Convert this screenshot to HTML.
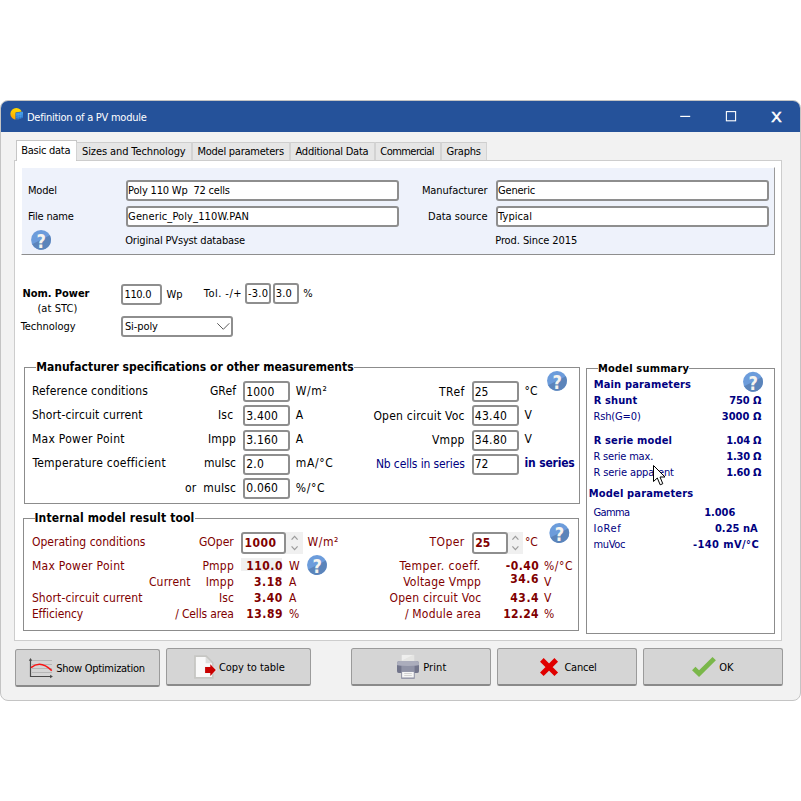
<!DOCTYPE html>
<html lang="en">
<head>
<meta charset="utf-8">
<title>Definition of a PV module</title>
<style>
html,body{margin:0;padding:0;}
body{width:801px;height:801px;background:#fff;position:relative;overflow:hidden;
 font-family:"DejaVu Sans Condensed","Liberation Sans",sans-serif;font-size:11px;color:#000;}
.a,.t{position:absolute;box-sizing:border-box;}
.t{white-space:pre;line-height:16px;height:16px;}
.win{left:0;top:100px;width:801px;height:601px;background:#f2f2f2;border:1px solid #c4c4c4;border-radius:8px;overflow:hidden;}
.titlebar{left:0;top:0;width:799px;height:31px;background:#25529a;}
.tab{background:#e6e6e6;border:1px solid #d3d3d3;border-top-color:#cecece;border-bottom:none;}
.tab.sel{background:#fff;border-color:#c6c6c6;}
.panel{background:#fff;border:1px solid #cdcdcd;}
.info{background:#eef2fb;border:1px solid #fff;border-right-color:#9a9a9a;border-bottom-color:#8e8e8e;}
.in{background:#fff;border:2px solid #8e8e8e;border-radius:3px;}
.grp{border:1px solid #8c8c8c;}
.cap{background:#fff;}
.btn{background:#d5d5d5;border:1px solid #9b9b9b;border-bottom:2px solid #8a8a8a;border-radius:2.5px;}
.spin{background:#f0f0f0;}
.ro{background:#f0f0f0;}
svg.a{overflow:visible;}
.lib{font-family:"Liberation Sans",sans-serif;}
.cx{-webkit-text-stroke:0.55px #fff;}

</style>
</head>
<body>
<div class="a win"><div class="a titlebar"></div></div>
<svg class="a" style="left:10px;top:107px" width="14" height="14" viewBox="0 0 14 14">
<defs><linearGradient id="sun" x1="0.6" y1="0" x2="0.2" y2="1"><stop offset="0" stop-color="#ffdb00"/><stop offset="0.5" stop-color="#ffc400"/><stop offset="1" stop-color="#ff9a00"/></linearGradient>
<linearGradient id="pv" x1="0" y1="0" x2="0" y2="1"><stop offset="0" stop-color="#46a2ee"/><stop offset="0.6" stop-color="#2f7fd2"/><stop offset="1" stop-color="#2a62b0"/></linearGradient></defs>
<circle cx="6.3" cy="6.85" r="5.95" fill="url(#sun)"/>
<path d="M5.5 5.6 L13.2 4.3 V11.2 L5.5 13.3Z" fill="#25529a"/>
<path d="M5.8 5.9 L13 4.7 V10.9 L5.8 12.9Z" fill="url(#pv)"/>
<path d="M8.2 5.5V12.2 M10.6 5.1V11.6 M5.8 8.2L13 6.8 M5.8 10.5L13 8.9" fill="none" stroke="#6ab4f4" stroke-width="0.45" opacity="0.7"/>
</svg>
<span class="t" style="top:110.00px;font-size:11px;letter-spacing:-0.255px;left:27.00px;color:#fff;">Definition of a PV module</span>
<svg class="a" style="left:675px;top:106px" width="115" height="22" viewBox="675 106 115 22">
<path d="M680.2 116.4H690.2" stroke="#fff" stroke-width="1.2" fill="none"/>
<rect x="726.4" y="111.6" width="9.2" height="9.2" stroke="#fff" stroke-width="1.1" fill="none"/>
</svg>
<span class="t lib cx" style="top:109.00px;font-size:15.5px;left:771.30px;color:#fff;">X</span>
<div class="a panel" style="left:14px;top:160px;width:768px;height:481px;"></div>
<div class="a tab sel" style="left:16px;top:140px;width:61px;height:21px;"></div>
<span class="t" style="top:143.00px;font-size:11px;letter-spacing:-0.260px;left:21.20px;">Basic data</span>
<div class="a tab" style="left:76px;top:142px;width:116px;height:18px;"></div>
<span class="t" style="top:144.00px;font-size:11px;letter-spacing:-0.102px;left:82.00px;">Sizes and Technology</span>
<div class="a tab" style="left:192px;top:142px;width:98px;height:18px;"></div>
<span class="t" style="top:144.00px;font-size:11px;letter-spacing:-0.238px;left:197.40px;">Model parameters</span>
<div class="a tab" style="left:290px;top:142px;width:85px;height:18px;"></div>
<span class="t" style="top:144.00px;font-size:11px;letter-spacing:-0.238px;left:295.50px;">Additional Data</span>
<div class="a tab" style="left:375px;top:142px;width:66px;height:18px;"></div>
<span class="t" style="top:144.00px;font-size:11px;letter-spacing:-0.552px;left:380.30px;">Commercial</span>
<div class="a tab" style="left:441px;top:142px;width:46px;height:18px;"></div>
<span class="t" style="top:144.00px;font-size:11px;letter-spacing:-0.183px;left:446.40px;">Graphs</span>
<div class="a info" style="left:21px;top:167px;width:754px;height:88px;"></div>
<span class="t" style="top:183.00px;font-size:11px;letter-spacing:-0.155px;left:27.90px;">Model</span>
<span class="t" style="top:209.00px;font-size:11px;letter-spacing:-0.225px;left:27.90px;">File name</span>
<div class="a in" style="left:126px;top:180px;width:273px;height:21px;"></div>
<span class="t" style="top:183.00px;font-size:11px;letter-spacing:-0.189px;left:128.10px;">Poly 110 Wp  72 cells</span>
<div class="a in" style="left:126px;top:206px;width:273px;height:21px;"></div>
<span class="t" style="top:209.00px;font-size:11px;letter-spacing:0.120px;left:128.10px;">Generic_Poly_110W.PAN</span>
<svg class="a help" style="left:30px;top:229px" width="22" height="22" viewBox="-11.05 -10.85 22 22">
<circle r="9.95" fill="#6c9cdb"/>
<path d="M8.87 -4.52 A9.95 9.95 0 0 1 -8.87 4.52 Z" fill="#5b84ba"/>
<text x="0.1" y="7.9" text-anchor="middle" transform="scale(0.9,1)" font-family="DejaVu Sans Condensed,Liberation Sans,sans-serif" font-weight="bold" font-size="20" fill="#f6f4ef">?</text>
</svg>
<span class="t" style="top:233.00px;font-size:11px;letter-spacing:-0.169px;left:125.20px;">Original PVsyst database</span>
<span class="t" style="top:183.00px;font-size:11px;letter-spacing:-0.062px;left:421.90px;">Manufacturer</span>
<span class="t" style="top:209.00px;font-size:11px;letter-spacing:-0.021px;left:428.10px;">Data source</span>
<div class="a in" style="left:496px;top:180px;width:273px;height:21px;"></div>
<span class="t" style="top:183.00px;font-size:11px;letter-spacing:-0.215px;left:498.10px;">Generic</span>
<div class="a in" style="left:496px;top:206px;width:273px;height:21px;"></div>
<span class="t" style="top:209.00px;font-size:11px;letter-spacing:0.069px;left:498.10px;">Typical</span>
<span class="t" style="top:233.00px;font-size:11px;letter-spacing:-0.086px;left:495.20px;">Prod. Since 2015</span>
<span class="t" style="top:286.00px;font-size:11px;letter-spacing:-0.032px;left:22.40px;font-weight:bold;">Nom. Power</span>
<span class="t" style="top:301.00px;font-size:11px;letter-spacing:0.099px;left:37.40px;">(at STC)</span>
<span class="t" style="top:319.00px;font-size:11px;letter-spacing:-0.050px;left:20.70px;">Technology</span>
<div class="a in" style="left:121px;top:284px;width:41px;height:21px;"></div>
<span class="t" style="top:287.00px;font-size:11px;letter-spacing:-0.307px;left:124.40px;">110.0</span>
<span class="t" style="top:287.00px;font-size:11px;left:166.40px;">Wp</span>
<span class="t" style="top:286.00px;font-size:11px;letter-spacing:0.462px;left:203.80px;">Tol. -/+</span>
<div class="a in" style="left:245px;top:283px;width:26px;height:21px;"></div>
<span class="t" style="top:286.00px;font-size:11px;letter-spacing:0.263px;left:247.90px;">-3.0</span>
<div class="a in" style="left:273px;top:283px;width:26px;height:21px;"></div>
<span class="t" style="top:286.00px;font-size:11px;letter-spacing:0.183px;left:275.70px;">3.0</span>
<span class="t" style="top:286.00px;font-size:11px;left:303.20px;">%</span>
<div class="a in" style="left:121px;top:316px;width:112px;height:21px;"></div>
<span class="t" style="top:319.00px;font-size:11px;letter-spacing:-0.077px;left:124.90px;">Si-poly</span>
<svg class="a" style="left:216px;top:322px" width="15" height="9" viewBox="216 322 15 9"><path d="M217.3 323.3 L223.3 329.3 L229.3 323.3" stroke="#5a5a5a" stroke-width="1" fill="none"/></svg>
<div class="a grp" style="left:24px;top:367px;width:556px;height:137px;"></div>
<div class="a cap" style="left:36px;top:360px;width:318px;height:16px;"></div>
<span class="t" style="top:359.00px;font-size:12px;left:36.20px;font-weight:bold;">Manufacturer specifications or other measurements</span>
<span class="t" style="top:383.00px;font-size:12px;letter-spacing:0.149px;left:31.90px;">Reference conditions</span>
<span class="t" style="top:407.00px;font-size:12px;letter-spacing:0.114px;left:31.90px;">Short-circuit current</span>
<span class="t" style="top:431.00px;font-size:12px;letter-spacing:0.291px;left:31.90px;">Max Power Point</span>
<span class="t" style="top:455.00px;font-size:12px;letter-spacing:0.237px;left:32.40px;">Temperature coefficient</span>
<span class="t" style="top:383.00px;font-size:12px;letter-spacing:0.106px;left:209.90px;">GRef</span>
<span class="t" style="top:407.00px;font-size:12px;letter-spacing:0.300px;left:217.90px;">Isc</span>
<span class="t" style="top:431.00px;font-size:12px;letter-spacing:0.226px;left:207.90px;">Impp</span>
<span class="t" style="top:455.00px;font-size:12px;left:203.90px;">muIsc</span>
<span class="t" style="top:480.00px;font-size:12px;letter-spacing:0.138px;left:184.90px;">or  muIsc</span>
<div class="a in" style="left:243px;top:381px;width:47px;height:21px;"></div>
<span class="t" style="top:384.00px;font-size:12px;letter-spacing:0.210px;left:246.20px;">1000</span>
<span class="t" style="top:383.00px;font-size:12px;letter-spacing:0.600px;left:295.80px;">W/m²</span>
<div class="a in" style="left:243px;top:405px;width:47px;height:21px;"></div>
<span class="t" style="top:408.00px;font-size:12px;letter-spacing:0.223px;left:246.20px;">3.400</span>
<span class="t" style="top:407.00px;font-size:12px;left:295.80px;">A</span>
<div class="a in" style="left:243px;top:430px;width:47px;height:21px;"></div>
<span class="t" style="top:432.00px;font-size:12px;letter-spacing:0.223px;left:246.20px;">3.160</span>
<span class="t" style="top:431.00px;font-size:12px;left:295.80px;">A</span>
<div class="a in" style="left:243px;top:454px;width:47px;height:21px;"></div>
<span class="t" style="top:456.00px;font-size:12px;letter-spacing:0.300px;left:246.20px;">2.0</span>
<span class="t" style="top:455.00px;font-size:12px;letter-spacing:0.600px;left:295.80px;">mA/°C</span>
<div class="a in" style="left:243px;top:478px;width:47px;height:21px;"></div>
<span class="t" style="top:480.00px;font-size:12px;letter-spacing:0.223px;left:246.20px;">0.060</span>
<span class="t" style="top:480.00px;font-size:12px;letter-spacing:0.600px;left:295.80px;">%/°C</span>
<span class="t" style="top:384.00px;font-size:12px;letter-spacing:0.467px;left:438.90px;">TRef</span>
<span class="t" style="top:408.00px;font-size:12px;letter-spacing:0.219px;left:373.40px;">Open circuit Voc</span>
<span class="t" style="top:432.00px;font-size:12px;letter-spacing:0.325px;left:431.90px;">Vmpp</span>
<span class="t" style="top:456.00px;font-size:12px;letter-spacing:-0.138px;left:375.90px;color:#00007f;">Nb cells in series</span>
<div class="a in" style="left:472px;top:381px;width:47px;height:21px;"></div>
<span class="t" style="top:384.00px;font-size:12px;left:474.70px;">25</span>
<span class="t" style="top:383.00px;font-size:12px;left:524.60px;">°C</span>
<div class="a in" style="left:472px;top:405px;width:47px;height:21px;"></div>
<span class="t" style="top:408.00px;font-size:12px;letter-spacing:0.348px;left:474.70px;">43.40</span>
<span class="t" style="top:407.00px;font-size:12px;left:524.60px;">V</span>
<div class="a in" style="left:472px;top:430px;width:47px;height:21px;"></div>
<span class="t" style="top:432.00px;font-size:12px;letter-spacing:0.348px;left:474.70px;">34.80</span>
<span class="t" style="top:431.00px;font-size:12px;left:524.60px;">V</span>
<div class="a in" style="left:472px;top:454px;width:47px;height:21px;"></div>
<span class="t" style="top:456.00px;font-size:12px;left:474.70px;">72</span>
<span class="t" style="top:455.00px;font-size:12px;letter-spacing:-0.184px;left:524.60px;font-weight:bold;color:#00007f;">in series</span>
<svg class="a help" style="left:546px;top:370px" width="22" height="22" viewBox="-11 -10.85 22 22">
<circle r="9.95" fill="#6c9cdb"/>
<path d="M8.87 -4.52 A9.95 9.95 0 0 1 -8.87 4.52 Z" fill="#5b84ba"/>
<text x="0.1" y="7.9" text-anchor="middle" transform="scale(0.9,1)" font-family="DejaVu Sans Condensed,Liberation Sans,sans-serif" font-weight="bold" font-size="20" fill="#f6f4ef">?</text>
</svg>
<div class="a grp" style="left:23px;top:518px;width:556px;height:113px;"></div>
<div class="a cap" style="left:35px;top:511px;width:160px;height:16px;"></div>
<span class="t" style="top:510.00px;font-size:12px;letter-spacing:0.149px;left:34.40px;font-weight:bold;">Internal model result tool</span>
<span class="t" style="top:534.00px;font-size:12px;letter-spacing:0.034px;left:31.90px;color:#7f0000;">Operating conditions</span>
<span class="t" style="top:558.00px;font-size:12px;letter-spacing:0.291px;left:31.90px;color:#7f0000;">Max Power Point</span>
<span class="t" style="top:574.00px;font-size:12px;letter-spacing:0.183px;left:148.90px;color:#7f0000;">Current</span>
<span class="t" style="top:590.00px;font-size:12px;letter-spacing:0.114px;left:31.90px;color:#7f0000;">Short-circuit current</span>
<span class="t" style="top:606.00px;font-size:12px;letter-spacing:-0.102px;left:31.90px;color:#7f0000;">Efficiency</span>
<span class="t" style="top:606.00px;font-size:12px;letter-spacing:-0.160px;left:175.20px;color:#7f0000;">/ Cells area</span>
<span class="t" style="top:534.00px;font-size:12px;letter-spacing:0.022px;left:198.90px;color:#7f0000;">GOper</span>
<span class="t" style="top:558.00px;font-size:12px;letter-spacing:0.217px;left:202.40px;color:#7f0000;">Pmpp</span>
<span class="t" style="top:574.00px;font-size:12px;letter-spacing:0.226px;left:205.70px;color:#7f0000;">Impp</span>
<span class="t" style="top:590.00px;font-size:12px;letter-spacing:0.175px;left:218.90px;color:#7f0000;">Isc</span>
<div class="a spin" style="left:285px;top:532px;width:18px;height:22px;"></div>
<div class="a in" style="left:241px;top:532px;width:45px;height:22px;"></div>
<span class="t" style="top:535.00px;font-size:12px;letter-spacing:0.518px;left:244.40px;font-weight:bold;color:#7f0000;">1000</span>
<svg class="a" style="left:289px;top:535px" width="12" height="16" viewBox="289 535 12 16"><path d="M291.6 539.6 L294.6 536.4 L297.6 539.6 M291.6 546.4 L294.6 549.6 L297.6 546.4" stroke="#9c9c9c" stroke-width="1.25" fill="none"/></svg>
<span class="t" style="top:534.00px;font-size:12px;letter-spacing:0.600px;left:307.40px;color:#7f0000;">W/m²</span>
<div class="a ro" style="left:241px;top:558px;width:41px;height:13px;"></div>
<span class="t" style="top:558.00px;font-size:12px;letter-spacing:0.536px;left:246.20px;font-weight:bold;color:#7f0000;">110.0</span>
<span class="t" style="top:558.00px;font-size:12px;left:288.90px;color:#7f0000;">W</span>
<svg class="a help" style="left:306px;top:554px" width="22" height="22" viewBox="-11 -11 22 22">
<circle r="9.95" fill="#6c9cdb"/>
<path d="M8.87 -4.52 A9.95 9.95 0 0 1 -8.87 4.52 Z" fill="#5b84ba"/>
<text x="0.1" y="7.9" text-anchor="middle" transform="scale(0.9,1)" font-family="DejaVu Sans Condensed,Liberation Sans,sans-serif" font-weight="bold" font-size="20" fill="#f6f4ef">?</text>
</svg>
<span class="t" style="top:574.00px;font-size:12px;letter-spacing:0.600px;left:253.90px;font-weight:bold;color:#7f0000;">3.18</span>
<span class="t" style="top:574.00px;font-size:12px;left:288.90px;color:#7f0000;">A</span>
<span class="t" style="top:590.00px;font-size:12px;letter-spacing:0.600px;left:253.90px;font-weight:bold;color:#7f0000;">3.40</span>
<span class="t" style="top:590.00px;font-size:12px;left:288.90px;color:#7f0000;">A</span>
<span class="t" style="top:606.00px;font-size:12px;letter-spacing:0.536px;left:246.20px;font-weight:bold;color:#7f0000;">13.89</span>
<span class="t" style="top:606.00px;font-size:12px;left:288.90px;color:#7f0000;">%</span>
<span class="t" style="top:534.00px;font-size:12px;letter-spacing:0.467px;left:429.40px;color:#7f0000;">TOper</span>
<div class="a spin" style="left:507px;top:532px;width:16px;height:22px;"></div>
<div class="a in" style="left:472px;top:532px;width:36px;height:22px;"></div>
<span class="t" style="top:535.00px;font-size:12px;left:475.20px;font-weight:bold;color:#7f0000;">25</span>
<svg class="a" style="left:509px;top:535px" width="12" height="16" viewBox="509 535 12 16"><path d="M512.4 539.6 L515.4 536.4 L518.4 539.6 M512.4 546.4 L515.4 549.6 L518.4 546.4" stroke="#9c9c9c" stroke-width="1.25" fill="none"/></svg>
<span class="t" style="top:534.00px;font-size:12px;left:524.90px;color:#7f0000;">°C</span>
<svg class="a help" style="left:548px;top:522px" width="22" height="22" viewBox="-11.3 -11 22 22">
<circle r="9.95" fill="#6c9cdb"/>
<path d="M8.87 -4.52 A9.95 9.95 0 0 1 -8.87 4.52 Z" fill="#5b84ba"/>
<text x="0.1" y="7.9" text-anchor="middle" transform="scale(0.9,1)" font-family="DejaVu Sans Condensed,Liberation Sans,sans-serif" font-weight="bold" font-size="20" fill="#f6f4ef">?</text>
</svg>
<span class="t" style="top:558.00px;font-size:12px;letter-spacing:0.473px;left:399.40px;color:#7f0000;">Temper. coeff.</span>
<span class="t" style="top:574.00px;font-size:12px;letter-spacing:0.213px;left:403.20px;color:#7f0000;">Voltage Vmpp</span>
<span class="t" style="top:590.00px;font-size:12px;letter-spacing:0.273px;left:389.40px;color:#7f0000;">Open circuit Voc</span>
<span class="t" style="top:606.00px;font-size:12px;letter-spacing:0.191px;left:404.90px;color:#7f0000;">/ Module area</span>
<span class="t" style="top:558.00px;font-size:12px;letter-spacing:0.494px;left:505.70px;font-weight:bold;color:#7f0000;">-0.40</span>
<span class="t" style="top:571.00px;font-size:12px;letter-spacing:0.553px;left:510.20px;font-weight:bold;color:#7f0000;">34.6</span>
<span class="t" style="top:590.00px;font-size:12px;letter-spacing:0.600px;left:510.20px;font-weight:bold;color:#7f0000;">43.4</span>
<span class="t" style="top:606.00px;font-size:12px;letter-spacing:0.286px;left:503.20px;font-weight:bold;color:#7f0000;">12.24</span>
<span class="t" style="top:558.00px;font-size:12px;letter-spacing:0.600px;left:543.90px;color:#7f0000;">%/°C</span>
<span class="t" style="top:574.00px;font-size:12px;left:543.90px;color:#7f0000;">V</span>
<span class="t" style="top:590.00px;font-size:12px;left:543.90px;color:#7f0000;">V</span>
<span class="t" style="top:606.00px;font-size:12px;left:543.90px;color:#7f0000;">%</span>
<div class="a grp" style="left:586px;top:368px;width:189px;height:266px;"></div>
<div class="a cap" style="left:598px;top:361px;width:91px;height:16px;"></div>
<span class="t" style="top:361.00px;font-size:11px;letter-spacing:0.178px;left:598.00px;font-weight:bold;">Model summary</span>
<span class="t" style="top:377.00px;font-size:11px;letter-spacing:0.165px;left:593.70px;font-weight:bold;color:#00007f;">Main parameters</span>
<svg class="a help" style="left:742px;top:371px" width="22" height="22" viewBox="-11 -10.8 22 22">
<circle r="9.95" fill="#6c9cdb"/>
<path d="M8.87 -4.52 A9.95 9.95 0 0 1 -8.87 4.52 Z" fill="#5b84ba"/>
<text x="0.1" y="7.9" text-anchor="middle" transform="scale(0.9,1)" font-family="DejaVu Sans Condensed,Liberation Sans,sans-serif" font-weight="bold" font-size="20" fill="#f6f4ef">?</text>
</svg>
<span class="t" style="top:393.00px;font-size:11px;letter-spacing:0.126px;left:593.70px;font-weight:bold;color:#00007f;">R shunt</span>
<span class="t" style="top:409.00px;font-size:11px;letter-spacing:-0.128px;left:593.40px;color:#00007f;">Rsh(G=0)</span>
<span class="t" style="top:433.00px;font-size:11px;letter-spacing:0.158px;left:593.70px;font-weight:bold;color:#00007f;">R serie model</span>
<span class="t" style="top:449.00px;font-size:11px;letter-spacing:-0.192px;left:593.40px;color:#00007f;">R serie max.</span>
<span class="t" style="top:465.00px;font-size:11px;letter-spacing:-0.099px;left:593.40px;color:#00007f;">R serie apparent</span>
<span class="t" style="top:486.00px;font-size:11px;letter-spacing:0.163px;left:588.80px;font-weight:bold;color:#00007f;">Model parameters</span>
<span class="t" style="top:505.00px;font-size:11px;letter-spacing:-0.600px;left:593.40px;color:#00007f;">Gamma</span>
<span class="t" style="top:521.00px;font-size:11px;letter-spacing:0.600px;left:593.40px;color:#00007f;">IoRef</span>
<span class="t" style="top:537.00px;font-size:11px;letter-spacing:-0.307px;left:593.40px;color:#00007f;">muVoc</span>
<span class="t" style="top:393.00px;font-size:11px;letter-spacing:-0.054px;left:729.20px;font-weight:bold;color:#00007f;">750 Ω</span>
<span class="t" style="top:409.00px;font-size:11px;letter-spacing:0.079px;left:721.70px;font-weight:bold;color:#00007f;">3000 Ω</span>
<span class="t" style="top:433.00px;font-size:11px;letter-spacing:-0.196px;left:726.20px;font-weight:bold;color:#00007f;">1.04 Ω</span>
<span class="t" style="top:449.00px;font-size:11px;letter-spacing:-0.196px;left:726.20px;font-weight:bold;color:#00007f;">1.30 Ω</span>
<span class="t" style="top:465.00px;font-size:11px;letter-spacing:-0.196px;left:726.20px;font-weight:bold;color:#00007f;">1.60 Ω</span>
<span class="t" style="top:505.00px;font-size:11px;letter-spacing:-0.053px;left:704.20px;font-weight:bold;color:#00007f;">1.006</span>
<span class="t" style="top:521.00px;font-size:11px;letter-spacing:0.054px;left:714.90px;font-weight:bold;color:#00007f;">0.25 nA</span>
<span class="t" style="top:537.00px;font-size:11px;letter-spacing:0.420px;left:692.90px;font-weight:bold;color:#00007f;">-140 mV/°C</span>
<svg class="a" style="left:652px;top:464px" width="15" height="23" viewBox="0 0 15 23">
<path d="M1.5 1.5 V17.5 L5.3 14 L8.2 20.8 L10.8 19.7 L8 13 H13 Z" fill="#fff" stroke="#000" stroke-width="1" stroke-linejoin="miter"/></svg>
<div class="a btn" style="left:15px;top:649px;width:145px;height:38px;"></div>
<div class="a btn" style="left:166px;top:648px;width:145px;height:38px;"></div>
<div class="a btn" style="left:351px;top:648px;width:140px;height:38px;"></div>
<div class="a btn" style="left:497px;top:648px;width:140px;height:38px;"></div>
<div class="a btn" style="left:643px;top:648px;width:140px;height:38px;"></div>
<span class="t" style="top:661.00px;font-size:11px;letter-spacing:-0.272px;left:56.20px;">Show Optimization</span>
<span class="t" style="top:660.00px;font-size:11px;letter-spacing:-0.041px;left:218.90px;">Copy to table</span>
<span class="t" style="top:660.00px;font-size:11px;letter-spacing:0.088px;left:423.20px;">Print</span>
<span class="t" style="top:660.00px;font-size:11px;letter-spacing:-0.229px;left:564.40px;">Cancel</span>
<span class="t" style="top:660.00px;font-size:11px;left:719.20px;">OK</span>
<svg class="a" style="left:28px;top:656px" width="27" height="24" viewBox="28 656 27 24">
<path d="M32 660.5H52 M32 664.5H52 M32 668.5H52 M32 672.5H52" stroke="#b6b6b6" stroke-width="1" fill="none"/>
<path d="M30.5 659.5V676.5H51" stroke="#4a4a4a" stroke-width="1.2" fill="none"/>
<path d="M30.5 658l-1.7 2.8h3.4z M52.9 676.5l-2.8-1.7v3.4z" fill="#4a4a4a"/>
<path d="M31 667.6 Q40.6 659.6 51.8 670.6" stroke="#fa1414" stroke-width="1.6" fill="none"/>
</svg>
<svg class="a" style="left:190px;top:653px" width="28" height="28" viewBox="190 653 28 28">
<path d="M194.1 655.2H206.6L213.6 662.4V678.7H194.1Z" fill="#c6c6c3"/>
<path d="M195.9 657H205.6L211.9 663.3V677H195.9Z" fill="#f9f9f9"/>
<path d="M205.6 657V663.3H211.9Z" fill="#dddddc"/>
<path d="M204.4 666.3H209.6V663.2L216.9 669.9L209.6 676.8V673.6H204.4Z" fill="#f4f4f4"/>
<path d="M205.1 667H210.3V664.2L215.9 669.9L210.3 676V672.9H205.1Z" fill="#c90000"/>
</svg>
<svg class="a" style="left:395px;top:653px" width="26" height="28" viewBox="395 653 26 28">
<path d="M401.8 654.9H414.3V662H401.8Z" fill="#e5e5e3"/>
<path d="M401.8 654.9H413L401.8 660.6Z" fill="#efefee"/>
<rect x="397" y="661" width="22" height="12" rx="2.2" fill="#9093a6"/>
<path d="M397 665V664.2Q397 661 400.2 661H415.8Q419 661 419 664.2V665Q408 667.2 397 665Z" fill="#abadbc"/>
<path d="M397 665.2Q399 665.8 401.4 666V673H399.2Q397 673 397 670.8Z M419 665.2Q417 665.8 414.6 666V673H416.8Q419 673 419 670.8Z" fill="#72758b"/>
<rect x="401.2" y="671.1" width="13.5" height="7.7" fill="#8a8da1"/>
<rect x="402.1" y="671.9" width="11.7" height="5.6" fill="#f6f6f6"/>
<path d="M404.2 673.5H411.8 M404.2 675.5H411.8" stroke="#c9c9c9" stroke-width="0.8"/>
</svg>
<svg class="a" style="left:538px;top:656px" width="22" height="22" viewBox="538 656 22 22">
<path d="M541.85 659.85 L556.25 674.25 M556.25 659.85 L541.85 674.25" stroke="#e00000" stroke-width="5.1" fill="none"/>
</svg>
<svg class="a" style="left:690px;top:655px" width="28" height="24" viewBox="690 655 28 24">
<path d="M692.05 670.3 L695.45 666.85 L699.05 670.15 L712.5 656.95 L715.9 660.35 L699.05 676.95Z" fill="#7ab74a"/>
</svg>
</body>
</html>
